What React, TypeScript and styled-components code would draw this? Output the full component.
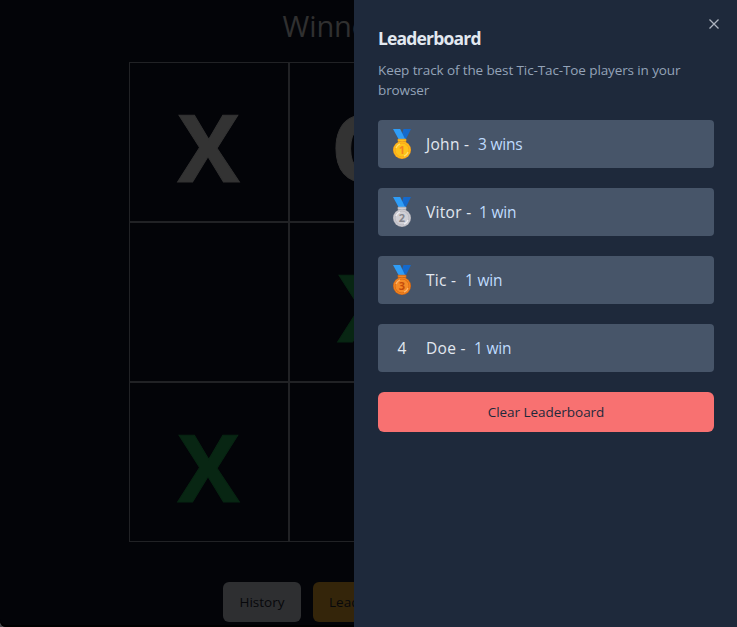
import React from "react";
import styled, { createGlobalStyle } from "styled-components";

const GlobalStyle = createGlobalStyle`
  *, *::before, *::after { box-sizing: border-box; }
  html, body { margin: 0; height: 100%; overflow: hidden; background: #45464a; }
  body { font-family: "Open Sans", "Noto Sans", sans-serif; }
  h1, h2, p, ol { margin: 0; padding: 0; }
  button { font-family: inherit; border: 0; }
`;

const Page = styled.main`
  width: 100%;
  height: 627px;
  display: flex;
  flex-direction: column;
  align-items: center;
  overflow: hidden;
  border-radius: 0 0 0 6px;
  box-shadow: inset 0 -2px #000;
  background: #030408;
`;

const Status = styled.h1`
  height: 36px;
  margin-top: 8px;
  width: 172px;
  font-size: 29px;
  line-height: 36px;
  font-weight: 400;
  letter-spacing: -0.1px;
  white-space: nowrap;
  color: #303030;
`;

const Board = styled.div`
  display: grid;
  grid-template: repeat(3, 160px) / repeat(3, 160px);
  flex-shrink: 0;
  margin-top: 18px;
  margin-left: 1px;
`;

const Cell = styled.div<{ $won?: boolean }>`
  display: flex;
  align-items: center;
  justify-content: center;
  border: 1px solid #212225;
  padding-top: 8px;
  font-size: 93px;
  line-height: 1;
  font-weight: 700;
  color: ${(p) => (p.$won ? "#082613" : "#333333")};
  -webkit-text-stroke: 0.9px currentColor;
`;

const Mark = styled.span<{ $round: boolean }>`
  margin-right: ${(p) => (p.$round ? 3 : 1)}px;
`;

const Actions = styled.div`
  display: flex;
  gap: 12px;
  width: 291px;
  margin-top: 40px;
`;

const ActionButton = styled.button<{ $gold?: boolean }>`
  height: 40px;
  flex-shrink: 0;
  min-width: 78px;
  padding: 0 16px;
  border-radius: 6px;
  font-size: 13.5px;
  font-weight: 500;
  white-space: nowrap;
  color: #07080b;
  background: ${(p) => (p.$gold ? "#34250a" : "#2e2f31")};
`;

const Panel = styled.aside`
  position: fixed;
  top: 0;
  right: 0;
  bottom: 0;
  width: 383px;
  padding: 24px 23px 24px 24px;
  display: flex;
  flex-direction: column;
  background: #1e293b;
`;

const CloseButton = styled.button`
  position: absolute;
  top: 16px;
  right: 15px;
  width: 16px;
  height: 16px;
  padding: 0;
  color: #adb4bf;
  background: none;
  svg { display: block; }
`;

const PanelTitle = styled.h2`
  font-size: 17.5px;
  line-height: 28px;
  font-weight: 700;
  letter-spacing: -0.82px;
  color: #e2e8f0;
`;

const Description = styled.p`
  margin-top: 8px;
  font-size: 13.5px;
  line-height: 20px;
  letter-spacing: -0.11px;
  color: #94a3b8;
`;

const Players = styled.ol`
  display: flex;
  flex-direction: column;
  gap: 20px;
  margin-top: 20px;
  list-style: none;
`;

const Player = styled.li`
  display: flex;
  align-items: center;
  height: 48px;
  padding-left: 12px;
  border-radius: 4px;
  font-size: 15.5px;
  line-height: 24px;
  font-weight: 500;
  color: #e2e8f0;
  background: #475569;
`;

const Rank = styled.span`
  display: flex;
  justify-content: center;
  width: 24px;
  margin-right: 12px;
`;

const Name = styled.span<{ $width: number }>`
  width: ${(p) => p.$width}px;
  white-space: nowrap;
  letter-spacing: 0.3px;
`;

const Wins = styled.span`
  color: #bfdbfe;
  letter-spacing: -0.2px;
`;

const ClearButton = styled.button`
  height: 40px;
  margin-top: 20px;
  border-radius: 6px;
  font-size: 13.5px;
  font-weight: 500;
  letter-spacing: -0.03px;
  color: #1e293b;
  background: #f87171;
`;

const DigitText = styled.text`
  font: 700 11px "Open Sans", sans-serif;
`;

type Metal = { rim: string; face: string; shine: string; digit: string };

const metals: Metal[] = [
  { rim: "#f9a21a", face: "#fdc31b", shine: "#ffe06c", digit: "#f4841f" },
  { rim: "#b8b7bd", face: "#d0cfd5", shine: "#eeeef2", digit: "#85858c" },
  { rim: "#d96912", face: "#f58b27", shine: "#ffb469", digit: "#c54c0c" },
];

function Medal({ place }: { place: number }) {
  const m = metals[place - 1];
  return (
    <svg width="20" height="32" viewBox="0 0 20 32" aria-hidden="true">
      <path d="M11.5 1H19L14 11H8.5Z" fill="#1469cc" />
      <path d="M1 1H8.2L13 11H6.5Z" fill="#2f9df7" />
      <path d="M6 11.2h8v2.2H6Z" fill={m.face} stroke={m.rim} strokeWidth="0.7" />
      <circle cx="10" cy="22" r="9" fill={m.rim} />
      <circle cx="10" cy="22" r="8.2" fill={m.face} />
      <circle cx="10" cy="22" r="7" fill={m.face} stroke={m.rim} strokeWidth="0.9" />
      <path d="M4 20A6.5 6.5 0 0 1 8 15.8M16 24A6.5 6.5 0 0 1 12 28.2" fill="none" stroke={m.shine} strokeWidth="1.3" />
      <DigitText x="10" y="26" textAnchor="middle" fill={m.digit}>{place}</DigitText>
    </svg>
  );
}

const cells = [
  { mark: "X" }, { mark: "O" }, { mark: "X", won: true },
  { mark: "" }, { mark: "X", won: true }, { mark: "O" },
  { mark: "X", won: true }, { mark: "" }, { mark: "O" },
];

const players = [
  { name: "John", wins: "3 wins", width: 52 },
  { name: "Vitor", wins: "1 win", width: 53 },
  { name: "Tic", wins: "1 win", width: 39 },
  { name: "Doe", wins: "1 win", width: 48 },
];

export default function App() {
  return (
    <>
      <GlobalStyle />
      <Page>
        <Status>Winner is: X</Status>
        <Board>
          {cells.map((c, i) => (
            <Cell key={i} $won={c.won}>
              <Mark $round={c.mark === "O"}>{c.mark}</Mark>
            </Cell>
          ))}
        </Board>
        <Actions>
          <ActionButton>History</ActionButton>
          <ActionButton $gold>Leaderboard</ActionButton>
        </Actions>
      </Page>
      <Panel>
        <CloseButton aria-label="Close">
          <svg width="16" height="16" viewBox="0 0 16 16" fill="none" stroke="currentColor" strokeWidth="1.3">
            <path d="M3.5 3.5L12.5 12.5M12.5 3.5L3.5 12.5" />
          </svg>
        </CloseButton>
        <PanelTitle>Leaderboard</PanelTitle>
        <Description>Keep track of the best Tic-Tac-Toe players in your browser</Description>
        <Players>
          {players.map((p, i) => (
            <Player key={p.name}>
              <Rank>{i < 3 ? <Medal place={i + 1} /> : i + 1}</Rank>
              <Name $width={p.width}>{p.name} -</Name>
              <Wins>{p.wins}</Wins>
            </Player>
          ))}
        </Players>
        <ClearButton>Clear Leaderboard</ClearButton>
      </Panel>
    </>
  );
}
